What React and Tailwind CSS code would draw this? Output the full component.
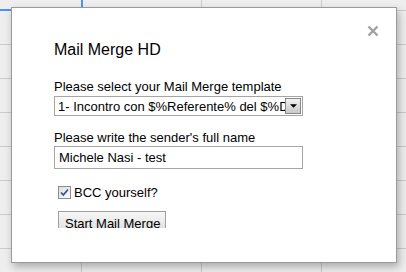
const rows = [11, 34, 34, 34, 34, 34, 34, 34, 34];
const cols = [82, 120, 120, 120];

const SheetGrid = () => (
  <div className="flex flex-col">
    {rows.map((h, r) => (
      <div key={r} className="flex" style={{ height: h }}>
        {cols.map((w, c) => (
          <div
            key={c}
            className="shrink-0 border-r border-b border-[#cbcbcb] box-border"
            style={{ width: w }}
          />
        ))}
      </div>
    ))}
  </div>
);

const App = () => {
  return (
    <div className="relative w-[406px] h-[272px] overflow-hidden bg-[#eeeeee] font-['Liberation_Sans',Arial,sans-serif] text-black">
      <SheetGrid />
      {/* selected cell edges peeking out */}
      <div className="absolute left-0 top-[9px] w-[12px] h-[2px] bg-[#4d90fe]" />
      <div className="absolute left-[81px] top-0 w-[2px] h-[11px] bg-[#4d90fe]" />

      {/* dialog */}
      <div className="absolute left-[11px] top-[7px] w-[386px] h-[256px] bg-white border border-[#9a9a9a] shadow-[2px_4px_8px_rgba(0,0,0,0.28)]">
        <button className="absolute right-[17px] top-[17px] w-[12px] h-[12px] text-[#a0a0a0]">
          <svg viewBox="0 0 12 12" className="w-[12px] h-[12px]">
            <path d="M1.5 1.5 L10.5 10.5 M10.5 1.5 L1.5 10.5" stroke="currentColor" strokeWidth="2.4" />
          </svg>
        </button>

        <div className="h-[220px] overflow-hidden pl-[42px] pt-[33px]">
          <h1 className="text-[16px] leading-[18px]">Mail Merge HD</h1>

          <div className="mt-[20px] text-[13px] leading-[15px]">Please select your Mail Merge template</div>
          <div className="mt-[2px] flex w-[249px] h-[20px] border border-[#a5a5a5] bg-white items-center">
            <div className="flex-1 overflow-hidden whitespace-nowrap text-[13px] leading-[15px] pl-[3px]">
              1- Incontro con $%Referente% del $%Denominazione%
            </div>
            <div className="w-[16px] h-[16px] mr-[1px] border border-[#8a8a8a] bg-gradient-to-b from-[#f2f2f2] to-[#c9c9c9] flex items-center justify-center">
              <svg viewBox="0 0 8 4" className="w-[7px] h-[4px]">
                <path d="M0 0 L8 0 L4 4 Z" fill="#000" />
              </svg>
            </div>
          </div>

          <div className="mt-[14px] text-[13px] leading-[15px]">Please write the sender's full name</div>
          <div className="mt-[1px] w-[249px] h-[23px] border border-[#a5a5a5] bg-white flex items-center pl-[4px] text-[13px] leading-[15px]">
            Michele Nasi - test
          </div>

          <div className="mt-[16px] ml-[4px] flex items-center h-[15px]">
            <div className="w-[13px] h-[13px] border border-[#8d8d8d] bg-gradient-to-br from-[#dcdcdc] to-[#ffffff] flex items-center justify-center">
              <svg viewBox="0 0 11 11" className="w-[11px] h-[11px]">
                <path d="M2 5.5 L4.3 8 L9 2.5" stroke="#3b4f9e" strokeWidth="1.8" fill="none" />
              </svg>
            </div>
            <span className="ml-[3px] text-[13px] leading-[15px]">BCC yourself?</span>
          </div>

          <button className="mt-[11px] ml-[4px] w-[108px] h-[22px] border border-[#a0a0a0] bg-gradient-to-b from-[#f7f7f7] to-[#dedede] text-[13px] leading-[15px] text-left pl-[6px] pt-[2px] block">
            Start Mail Merge
          </button>
        </div>
      </div>
    </div>
  );
};

export default App;
